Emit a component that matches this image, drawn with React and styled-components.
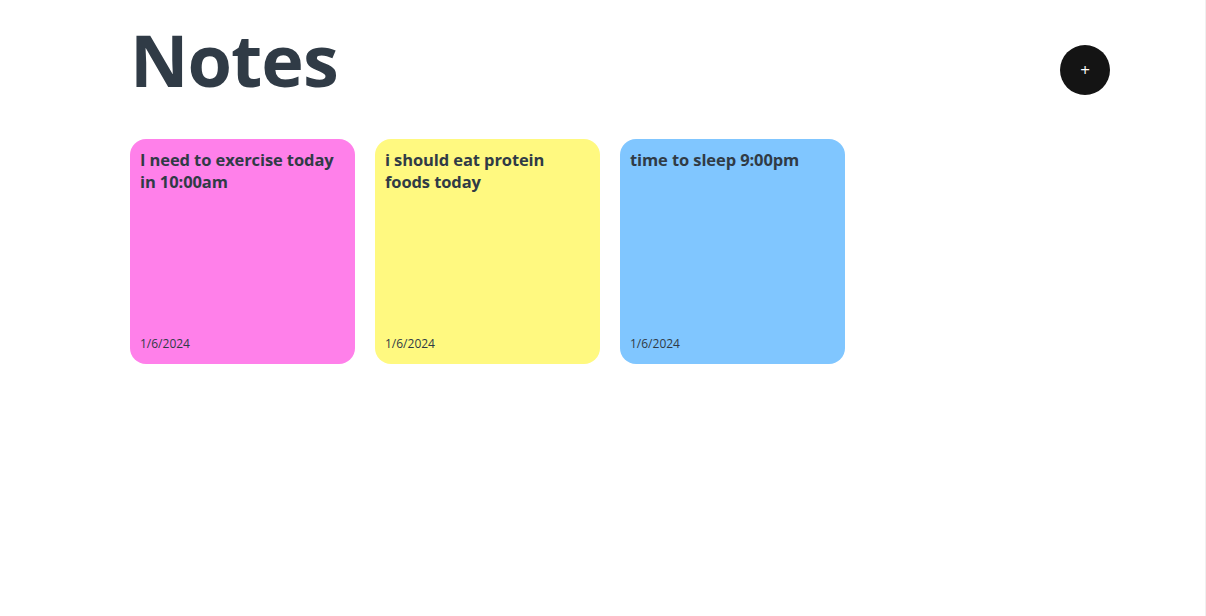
import styled, { createGlobalStyle } from "styled-components";

const GlobalStyle = createGlobalStyle`
  body {
    margin: 0;
    background: #fff;
    font-family: "Open Sans", "Noto Sans", sans-serif;
    color: #303b46;
  }
`;

const Page = styled.main`
  min-height: 616px;
  box-sizing: border-box;
  padding: 0 95px 0 130px;
  border-right: 1px solid #f0f0f0;
`;

const Header = styled.header`
  display: flex;
  align-items: center;
  justify-content: space-between;
  height: 139px;
`;

const Title = styled.h1`
  margin: 0 0 22px;
  font-size: 72px;
  font-weight: 700;
  letter-spacing: -1px;
  color: #303b46;
`;

const AddBtn = styled.button`
  width: 50px;
  height: 50px;
  border-radius: 50%;
  border: none;
  background: #141414;
  color: #fff;
  font-size: 17px;
  font-family: inherit;
  display: grid;
  place-items: center;
  cursor: pointer;
`;

const Grid = styled.section`
  display: flex;
  gap: 20px;
`;

const Card = styled.article`
  width: 225px;
  height: 225px;
  border-radius: 16px;
  background: ${(p) => p.$bg};
  padding: 10px;
  box-sizing: border-box;
  display: flex;
  flex-direction: column;
  justify-content: space-between;
`;

const Text = styled.p`
  margin: 0;
  font-size: 16.5px;
  font-weight: 700;
  line-height: 22px;
  letter-spacing: -0.1px;
  color: #303b46;
`;

const Date = styled.span`
  font-size: 12px;
  color: #303b46;
  padding-bottom: 2px;
`;

const notes = [
  { text: "I need to exercise today in 10:00am", bg: "#ff80ea" },
  { text: "i should eat protein foods today", bg: "#fff980" },
  { text: "time to sleep 9:00pm", bg: "#80c6ff" },
];

export default function App() {
  return (
    <>
      <GlobalStyle />
      <Page>
        <Header>
          <Title>Notes</Title>
          <AddBtn>+</AddBtn>
        </Header>
        <Grid>
          {notes.map((n, i) => (
            <Card key={i} $bg={n.bg}>
              <Text>{n.text}</Text>
              <Date>1/6/2024</Date>
            </Card>
          ))}
        </Grid>
      </Page>
    </>
  );
}
